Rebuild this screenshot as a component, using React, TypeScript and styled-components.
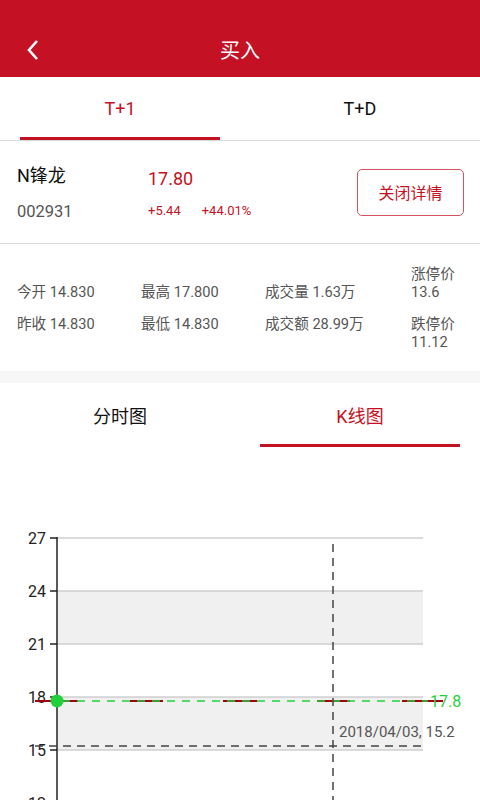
import styled, { createGlobalStyle } from "styled-components";

//style variables
const red = "#c51124";
const lineColor = "#dcdcdc";
const textGray = "#555";

const GlobalStyle = createGlobalStyle`
  html, body {
    margin: 0;
    padding: 0;
    background: #fff;
  }
  body {
    font-family: Roboto, "Noto Sans CJK SC", sans-serif;
  }
`;

const Page = styled.div`
  width: 480px;
  height: 800px;
  overflow: hidden;
  background: #fff;
`;

const Header = styled.header`
  height: 77px;
  background: ${red};
  display: flex;
  align-items: center;
  justify-content: center;
  position: relative;
`;

const BackButton = styled.button`
  position: absolute;
  left: 22px;
  top: 38px;
  width: 22px;
  height: 24px;
  padding: 0;
  border: none;
  background: none;
  display: flex;
  align-items: center;
  justify-content: center;
`;

const Title = styled.h1`
  margin: 22px 0 0;
  font-size: 20px;
  font-weight: 400;
  color: #fff;
`;

const TabBar = styled.div<{ tall?: boolean }>`
  display: flex;
  height: ${(p) => (p.tall ? "64px" : "63px")};
  border-bottom: ${(p) => (p.tall ? "none" : `1px solid ${lineColor}`)};
`;

const Tab = styled.div<{ active?: boolean }>`
  flex: 1;
  display: flex;
  align-items: center;
  justify-content: center;
  position: relative;
  font-size: 18px;
  color: ${(p) => (p.active ? red : "#111")};
  &::after {
    content: "";
    display: ${(p) => (p.active ? "block" : "none")};
    position: absolute;
    left: 20px;
    right: 20px;
    bottom: 0;
    height: 3px;
    background: ${red};
  }
`;

const StockRow = styled.section`
  height: 102px;
  display: flex;
  align-items: center;
  padding: 0 16px 0 17px;
  border-bottom: 1px solid ${lineColor};
`;

const NameCol = styled.div`
  width: 131px;
  display: flex;
  flex-direction: column;
  gap: 15px;
  padding-top: 2px;
`;

const StockName = styled.div`
  font-size: 18px;
  color: #111;
  line-height: 22px;
`;

const StockCode = styled.div`
  font-size: 16.5px;
  color: ${textGray};
  line-height: 20px;
`;

const PriceCol = styled.div`
  flex: 1;
  display: flex;
  flex-direction: column;
  gap: 13px;
  padding-top: 2px;
`;

const Price = styled.div`
  font-size: 18px;
  color: ${red};
  line-height: 22px;
`;

const Changes = styled.div`
  display: flex;
  gap: 21px;
  font-size: 13px;
  color: ${red};
  line-height: 16px;
`;

const CloseButton = styled.button`
  width: 107px;
  height: 47px;
  border: 1px solid #d4525f;
  border-radius: 5px;
  background: #fff;
  color: ${red};
  font-family: inherit;
  font-size: 16px;
`;

const Stats = styled.section`
  box-sizing: border-box;
  height: 139px;
  display: grid;
  grid-template-columns: 124px 124px 146px 1fr;
  grid-template-rows: 36px 36px;
  align-content: start;
  padding: 21px 0 0 17px;
  row-gap: 14px;
  border-bottom: 12px solid #f7f7f7;
`;

const Stat = styled.div<{ low?: boolean }>`
  font-size: 14.6px;
  color: ${textGray};
  line-height: 18px;
  align-self: ${(p) => (p.low ? "end" : "start")};
  white-space: pre-line;
`;

const ChartBox = styled.div`
  height: 353px;
`;

const gridYs = [538, 591, 644, 697, 750, 803];
const labels = ["27", "24", "21", "18", "15", "12"];
const candles: [number, number][] = [
  [35, 78],
  [130, 163],
  [223, 257],
  [317, 350],
  [402, 443],
];
const top = 447;

const KChart = () => (
  <svg width="480" height="353" viewBox={`0 ${top} 480 353`}>
    <rect x="57" y="591" width="366" height="53" fill="#f0f0f0" />
    <rect x="57" y="697" width="366" height="53" fill="#f0f0f0" />
    {gridYs.map((y, i) => (
      <g key={y}>
        <line x1="57" x2="423" y1={y} y2={y} stroke="#cfcfcf" strokeWidth="1.5" />
        <line x1="50" x2="57" y1={y} y2={y} stroke="#222" strokeWidth="1.5" />
        <text
          x="46"
          y={y + 6}
          textAnchor="end"
          fontSize="16"
          fill="#222"
          fontFamily="Roboto, sans-serif"
        >
          {labels[i]}
        </text>
      </g>
    ))}
    <line x1="57" x2="57" y1="537" y2="800" stroke="#222" strokeWidth="1.5" />
    {candles.map(([a, b]) => (
      <line key={a} x1={a} x2={b} y1="701" y2="701" stroke="#a30010" strokeWidth="2" />
    ))}
    <line
      x1="62"
      x2="428"
      y1="701"
      y2="701"
      stroke="#1fd23c"
      strokeWidth="1.5"
      strokeDasharray="8 7"
    />
    <text x="430" y="707" fontSize="16" fill="#1fd23c" fontFamily="Roboto, sans-serif">
      17.8
    </text>
    <line
      x1="333"
      x2="333"
      y1="544"
      y2="800"
      stroke="#444"
      strokeWidth="1.5"
      strokeDasharray="8 6"
    />
    <line
      x1="35"
      x2="423"
      y1="746"
      y2="746"
      stroke="#444"
      strokeWidth="1.5"
      strokeDasharray="8 6"
    />
    <text x="339" y="737" fontSize="15" fill={textGray} fontFamily="Roboto, sans-serif">
      2018/04/03, 15.2
    </text>
    <circle cx="57" cy="701" r="6.5" fill="#1fd23c" />
  </svg>
);

const App = () => {
  return (
    <Page>
      <GlobalStyle />
      <Header>
        <BackButton aria-label="back">
          <svg width="14" height="22" viewBox="0 0 14 22">
            <path d="M11 2 L3 11 L11 20" fill="none" stroke="#fff" strokeWidth="2.6" />
          </svg>
        </BackButton>
        <Title>买入</Title>
      </Header>
      <TabBar>
        <Tab active>T+1</Tab>
        <Tab>T+D</Tab>
      </TabBar>
      <StockRow>
        <NameCol>
          <StockName>N锋龙</StockName>
          <StockCode>002931</StockCode>
        </NameCol>
        <PriceCol>
          <Price>17.80</Price>
          <Changes>
            <span>+5.44</span>
            <span>+44.01%</span>
          </Changes>
        </PriceCol>
        <CloseButton>关闭详情</CloseButton>
      </StockRow>
      <Stats>
        <Stat low>今开 14.830</Stat>
        <Stat low>最高 17.800</Stat>
        <Stat low>成交量 1.63万</Stat>
        <Stat>{"涨停价\n13.6"}</Stat>
        <Stat>昨收 14.830</Stat>
        <Stat>最低 14.830</Stat>
        <Stat>成交额 28.99万</Stat>
        <Stat>{"跌停价\n11.12"}</Stat>
      </Stats>
      <TabBar tall>
        <Tab>分时图</Tab>
        <Tab active>K线图</Tab>
      </TabBar>
      <ChartBox>
        <KChart />
      </ChartBox>
    </Page>
  );
};

export default App;
